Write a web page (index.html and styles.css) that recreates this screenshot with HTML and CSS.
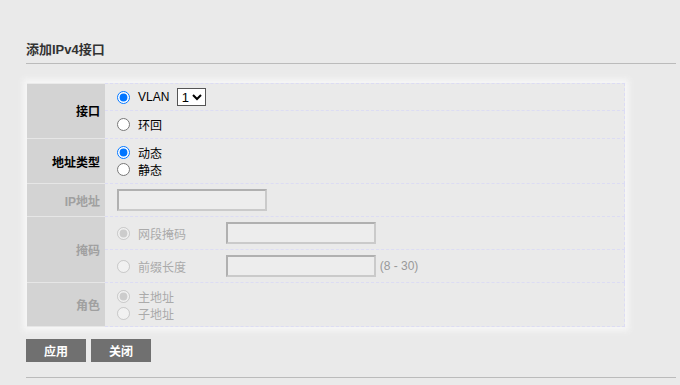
FILE: index.html
```html
<!DOCTYPE html>
<html lang="zh-cn">
<head>
    <meta charset="UTF-8">
    <title>添加IPv4接口</title>
    <link rel="stylesheet" href="styles.css">
</head>
<body>
    <div class="page">
        <h2 class="titulo">添加IPv4接口</h2>
        <table class="form-table">
            <tr class="h27">
                <th rowspan="2">接口</th>
                <td>
                    <label class="opt"><input type="radio" name="intf" checked><span>VLAN</span></label>
                    <select class="vlan"><option>1</option></select>
                </td>
            </tr>
            <tr class="h28">
                <td><label class="opt"><input type="radio" name="intf"><span>环回</span></label></td>
            </tr>
            <tr class="h45">
                <th>地址类型</th>
                <td>
                    <label class="opt line"><input type="radio" name="tipo" checked><span>动态</span></label>
                    <label class="opt line"><input type="radio" name="tipo"><span>静态</span></label>
                </td>
            </tr>
            <tr class="h33">
                <th class="off">IP地址</th>
                <td><input type="text" class="campo" disabled></td>
            </tr>
            <tr class="h33">
                <th rowspan="2" class="off">掩码</th>
                <td>
                    <label class="opt off fixo"><input type="radio" name="mask" checked disabled><span>网段掩码</span></label>
                    <input type="text" class="campo" disabled>
                </td>
            </tr>
            <tr class="h33">
                <td>
                    <label class="opt off fixo"><input type="radio" name="mask" disabled><span>前缀长度</span></label>
                    <input type="text" class="campo" disabled>
                    <span class="dica">(8 - 30)</span>
                </td>
            </tr>
            <tr class="h44">
                <th class="off">角色</th>
                <td>
                    <label class="opt off line"><input type="radio" name="papel" checked disabled><span>主地址</span></label>
                    <label class="opt off line"><input type="radio" name="papel" disabled><span>子地址</span></label>
                </td>
            </tr>
        </table>
        <div class="botoes">
            <button class="btn">应用</button>
            <button class="btn">关闭</button>
        </div>
        <div class="rodape"></div>
    </div>
</body>
</html>
```

FILE: styles.css
```css
body {
    margin: 0;
    background-color: #eaeaea;
    font-family: "Liberation Sans", "Noto Sans CJK SC", sans-serif;
    font-size: 12px;
    color: #000;
}

.page {
    padding: 0 4px 0 26px;
}

.titulo {
    margin: 0;
    padding-top: 42px;
    padding-bottom: 6px;
    line-height: 15px;
    font-size: 13px;
    font-weight: bold;
    color: #333;
    border-bottom: 1px solid #bbb;
}

.form-table {
    margin: 19px 0 0 1px;
    width: 598px;
    border-collapse: collapse;
    box-shadow: 0 0 6px 4px #f6f6f6;
}

.form-table th {
    width: 73px;
    padding: 0 5px 0 0;
    background-color: #d3d3d3;
    border-bottom: 1px solid #e6e6e6;
    text-align: right;
    font-weight: bold;
    color: #000;
}

.form-table th.off {
    color: #a0a0a0;
}

.form-table td {
    padding: 0 0 0 12px;
    background-color: #eaeaea;
    border: 1px dashed #dcdcf4;
    border-left: none;
}

.h27 { height: 27px; }
.h28 { height: 28px; }
.h45 { height: 45px; }
.h33 { height: 33px; }
.h44 { height: 44px; }

.opt {
    display: inline-flex;
    align-items: center;
    vertical-align: middle;
}

.opt input {
    width: 13px;
    height: 13px;
    margin: 0 8px 0 0;
}

.opt.line {
    display: flex;
    height: 17px;
}

.opt.off {
    color: #aaa;
}

.opt.fixo {
    width: 106px;
}

.vlan {
    margin-left: 4px;
    width: 29px;
    height: 18px;
    font-family: "Liberation Sans", sans-serif;
    font-size: 13px;
    vertical-align: middle;
    padding: 0;
    border: 1px solid #555;
    background-color: #fff;
}

.campo {
    width: 150px;
    height: 22px;
    box-sizing: border-box;
    border: 2px solid;
    border-color: #b0b0b0 #cacaca #cacaca #b0b0b0;
    background-color: #ededed;
    vertical-align: middle;
}

.dica {
    color: #999;
    vertical-align: middle;
}

.botoes {
    display: flex;
    gap: 5px;
    margin-top: 12px;
}

.btn {
    width: 60px;
    height: 23px;
    padding: 0;
    border: none;
    background-color: #707070;
    color: #fff;
    font-family: "Liberation Sans", "Noto Sans CJK SC", sans-serif;
    font-size: 12px;
    font-weight: bold;
}

.rodape {
    margin-top: 15px;
    border-top: 1px solid #bbb;
}
```
